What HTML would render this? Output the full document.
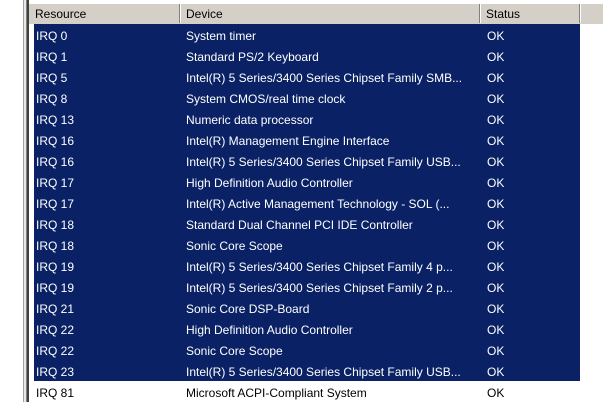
<!DOCTYPE html>
<html><head><style>
body{margin:0;width:603px;height:402px;background:#fff;position:relative;overflow:hidden;font-family:"Liberation Sans",sans-serif;font-size:12px}
.vl{position:absolute;top:0;height:402px}
.hdr{position:absolute;top:3px;left:29px;width:574px;height:20px;background:#d4d0c8;border-top:1px solid #fff}
.hc{position:absolute;top:0;height:19px;line-height:21px;border-right:1px solid #808080;box-shadow:1px 0 0 #fff;padding-left:6px;box-sizing:border-box;color:#000}
.row{position:absolute;left:34px;width:546px;height:21px;line-height:24px;color:#fff;background:#0a2265}
.row.n{background:#fff;color:#000}
.row span{position:absolute;top:0;height:21px;white-space:nowrap;overflow:hidden}
.a{left:2px}.b{left:152px;width:292px}.c{left:453px}
</style></head><body>
<div class="vl" style="left:23px;width:1px;background:#a0a0a0"></div>
<div class="vl" style="left:24px;width:2px;background:#e8e8e8"></div>
<div class="vl" style="left:26px;width:1px;background:#808080"></div>
<div class="vl" style="left:27px;width:2px;background:#404040"></div>
<div class="hdr">
<div class="hc" style="left:0;width:151px">Resource</div>
<div class="hc" style="left:151px;width:300px">Device</div>
<div class="hc" style="left:451px;width:100px">Status</div>
</div>
<div class="row" style="top:24px"><span class="a">IRQ 0</span><span class="b">System timer</span><span class="c">OK</span></div>
<div class="row" style="top:45px"><span class="a">IRQ 1</span><span class="b">Standard PS/2 Keyboard</span><span class="c">OK</span></div>
<div class="row" style="top:66px"><span class="a">IRQ 5</span><span class="b">Intel(R) 5 Series/3400 Series Chipset Family SMB...</span><span class="c">OK</span></div>
<div class="row" style="top:87px"><span class="a">IRQ 8</span><span class="b">System CMOS/real time clock</span><span class="c">OK</span></div>
<div class="row" style="top:108px"><span class="a">IRQ 13</span><span class="b">Numeric data processor</span><span class="c">OK</span></div>
<div class="row" style="top:129px"><span class="a">IRQ 16</span><span class="b">Intel(R) Management Engine Interface</span><span class="c">OK</span></div>
<div class="row" style="top:150px"><span class="a">IRQ 16</span><span class="b">Intel(R) 5 Series/3400 Series Chipset Family USB...</span><span class="c">OK</span></div>
<div class="row" style="top:171px"><span class="a">IRQ 17</span><span class="b">High Definition Audio Controller</span><span class="c">OK</span></div>
<div class="row" style="top:192px"><span class="a">IRQ 17</span><span class="b">Intel(R) Active Management Technology - SOL (...</span><span class="c">OK</span></div>
<div class="row" style="top:213px"><span class="a">IRQ 18</span><span class="b">Standard Dual Channel PCI IDE Controller</span><span class="c">OK</span></div>
<div class="row" style="top:234px"><span class="a">IRQ 18</span><span class="b">Sonic Core Scope</span><span class="c">OK</span></div>
<div class="row" style="top:255px"><span class="a">IRQ 19</span><span class="b">Intel(R) 5 Series/3400 Series Chipset Family 4 p...</span><span class="c">OK</span></div>
<div class="row" style="top:276px"><span class="a">IRQ 19</span><span class="b">Intel(R) 5 Series/3400 Series Chipset Family 2 p...</span><span class="c">OK</span></div>
<div class="row" style="top:297px"><span class="a">IRQ 21</span><span class="b">Sonic Core DSP-Board</span><span class="c">OK</span></div>
<div class="row" style="top:318px"><span class="a">IRQ 22</span><span class="b">High Definition Audio Controller</span><span class="c">OK</span></div>
<div class="row" style="top:339px"><span class="a">IRQ 22</span><span class="b">Sonic Core Scope</span><span class="c">OK</span></div>
<div class="row" style="top:360px"><span class="a">IRQ 23</span><span class="b">Intel(R) 5 Series/3400 Series Chipset Family USB...</span><span class="c">OK</span></div>
<div class="row n" style="top:381px"><span class="a">IRQ 81</span><span class="b">Microsoft ACPI-Compliant System</span><span class="c">OK</span></div>
</body></html>
